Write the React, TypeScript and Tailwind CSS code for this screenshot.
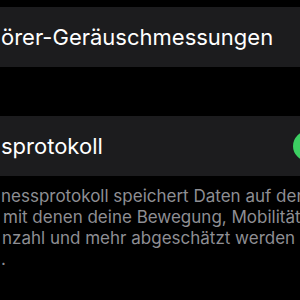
import React from 'react';

// Text that runs off the left edge of the crop: the hidden part sits in a zero-width box
const Clipped: React.FC<{ hidden: string; shown: string; className?: string }> = ({ hidden, shown, className }) => (
    <div className={`flex whitespace-nowrap ${className || ''}`}>
        <span className="-ml-[8px] mr-[8px] flex w-0 justify-end">{hidden}</span>
        <span>{shown}</span>
    </div>
);

const Toggle: React.FC = () => (
    <div className="-mr-[43px] h-[30px] w-[50px] shrink-0 rounded-full bg-[#3ccf62]" />
);

const App: React.FC = () => {
    return (
        <div className="h-[300px] w-[300px] overflow-hidden bg-black pt-[7px] text-white" style={{ fontFamily: 'Inter, "Noto Sans", sans-serif' }}>
            <div className="flex h-[60px] items-center bg-[#1c1c1e] pl-[1px] text-[22px] leading-[25px]">
                <Clipped hidden="Kopfh" shown="örer-Geräuschmessungen" />
            </div>

            <div className="mt-[49px] flex h-[60px] items-center justify-between bg-[#1c1c1e] pl-[1px] text-[22px] leading-[25px]">
                <Clipped hidden="Fitnes" shown="sprotokoll" />
                <Toggle />
            </div>

            <div className="pl-[1px] pt-[10px] text-[17px] leading-[21px] text-[#8e8e93]">
                <Clipped hidden="Das Fit" shown="nessprotokoll speichert Daten auf dem" />
                <Clipped hidden="iPhone," shown="mit denen deine Bewegung, Mobilität," className="pl-[2px]" />
                <Clipped hidden="Schritta" shown="nzahl und mehr abgeschätzt werden" className="pl-[1px]" />
                <Clipped hidden="können" shown="." />
            </div>
        </div>
    );
};

export default App;
